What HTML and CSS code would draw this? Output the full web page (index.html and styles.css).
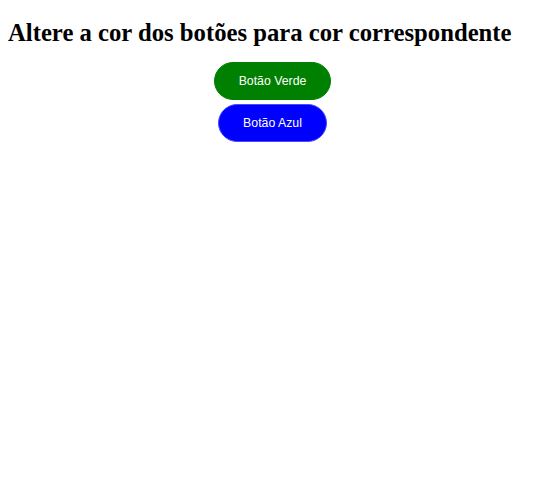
FILE: index.html
```html
<!DOCTYPE html>
<html lang="pt">
<head>
<meta charset="utf-8">
<title>Botões</title>
<link rel="stylesheet" href="styles.css">
</head>
<body>
<h1 class="title">Altere a cor dos botões para cor correspondente</h1>
<div class="buttons">
  <button class="btn btn-green" type="button">Botão Verde</button>
  <button class="btn btn-blue" type="button">Botão Azul</button>
</div>
</body>
</html>
```

FILE: styles.css
```css
body {
  margin: 8px;
  background: #ffffff;
  font-family: "Liberation Serif", "Times New Roman", serif;
}

.title {
  font-size: 24.7px;
  font-weight: bold;
  margin: 11px 0 15px;
  color: #000000;
}

.buttons {
  display: flex;
  flex-direction: column;
  align-items: center;
  gap: 4px;
}

.btn {
  font-family: "Liberation Sans", Arial, sans-serif;
  font-size: 12.3px;
  color: #ffffff;
  border: 1px solid transparent;
  border-radius: 20px;
  height: 38px;
  padding: 0 24px;
  cursor: pointer;
}

.btn-green {
  background: #008000;
  border-color: #008000;
}

.btn-blue {
  background: #0000ff;
  border-color: #4a4aff;
}
```
